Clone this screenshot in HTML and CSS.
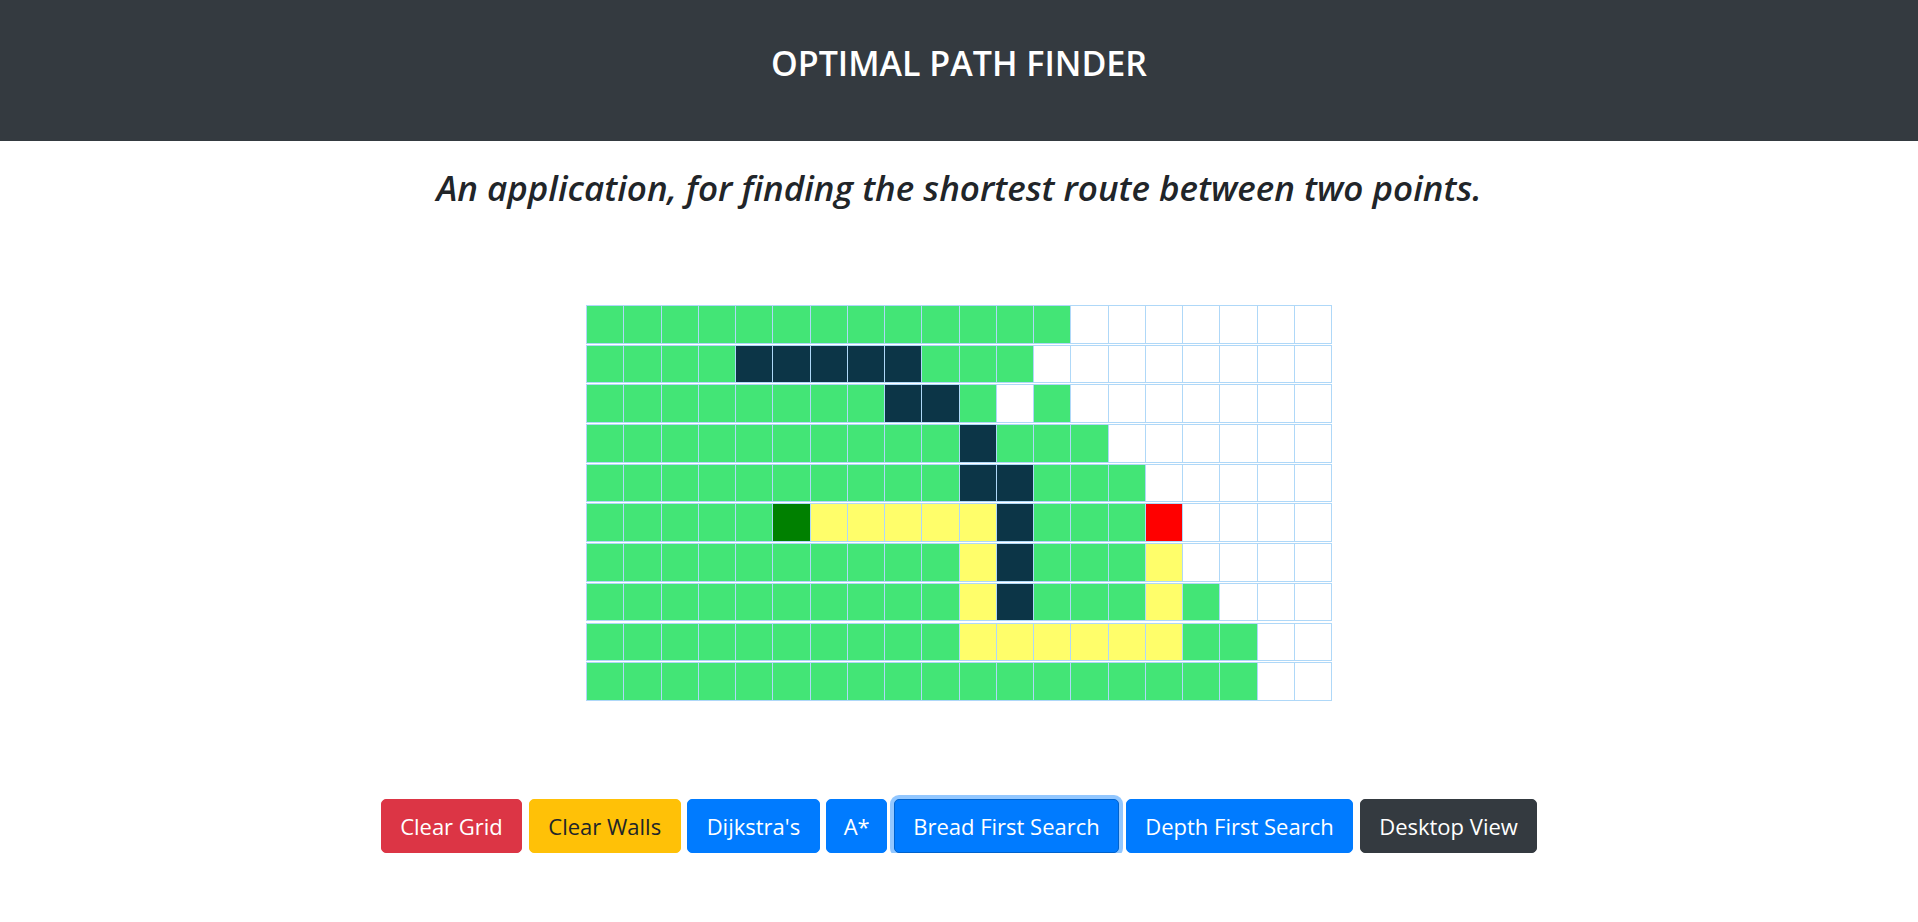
FILE: index.html
```html
<!DOCTYPE html>
<html lang="en">
<head>
<meta charset="utf-8">
<title>Optimal Path Finder</title>
<link rel="stylesheet" href="styles.css">
</head>
<body>
<header class="header">
  <h1 class="title">OPTIMAL PATH FINDER</h1>
</header>
<h2 class="subtitle">An application, for finding the shortest route between two points.</h2>
<div class="grid">
  <div class="row">
    <div class="c v"></div><div class="c v"></div><div class="c v"></div><div class="c v"></div><div class="c v"></div><div class="c v"></div><div class="c v"></div><div class="c v"></div><div class="c v"></div><div class="c v"></div><div class="c v"></div><div class="c v"></div><div class="c v"></div><div class="c"></div><div class="c"></div><div class="c"></div><div class="c"></div><div class="c"></div><div class="c"></div><div class="c"></div>
  </div>
  <div class="row">
    <div class="c v"></div><div class="c v"></div><div class="c v"></div><div class="c v"></div><div class="c w"></div><div class="c w"></div><div class="c w"></div><div class="c w"></div><div class="c w"></div><div class="c v"></div><div class="c v"></div><div class="c v"></div><div class="c"></div><div class="c"></div><div class="c"></div><div class="c"></div><div class="c"></div><div class="c"></div><div class="c"></div><div class="c"></div>
  </div>
  <div class="row">
    <div class="c v"></div><div class="c v"></div><div class="c v"></div><div class="c v"></div><div class="c v"></div><div class="c v"></div><div class="c v"></div><div class="c v"></div><div class="c w"></div><div class="c w"></div><div class="c v"></div><div class="c"></div><div class="c v"></div><div class="c"></div><div class="c"></div><div class="c"></div><div class="c"></div><div class="c"></div><div class="c"></div><div class="c"></div>
  </div>
  <div class="row">
    <div class="c v"></div><div class="c v"></div><div class="c v"></div><div class="c v"></div><div class="c v"></div><div class="c v"></div><div class="c v"></div><div class="c v"></div><div class="c v"></div><div class="c v"></div><div class="c w"></div><div class="c v"></div><div class="c v"></div><div class="c v"></div><div class="c"></div><div class="c"></div><div class="c"></div><div class="c"></div><div class="c"></div><div class="c"></div>
  </div>
  <div class="row">
    <div class="c v"></div><div class="c v"></div><div class="c v"></div><div class="c v"></div><div class="c v"></div><div class="c v"></div><div class="c v"></div><div class="c v"></div><div class="c v"></div><div class="c v"></div><div class="c w"></div><div class="c w"></div><div class="c v"></div><div class="c v"></div><div class="c v"></div><div class="c"></div><div class="c"></div><div class="c"></div><div class="c"></div><div class="c"></div>
  </div>
  <div class="row">
    <div class="c v"></div><div class="c v"></div><div class="c v"></div><div class="c v"></div><div class="c v"></div><div class="c s"></div><div class="c p"></div><div class="c p"></div><div class="c p"></div><div class="c p"></div><div class="c p"></div><div class="c w"></div><div class="c v"></div><div class="c v"></div><div class="c v"></div><div class="c f"></div><div class="c"></div><div class="c"></div><div class="c"></div><div class="c"></div>
  </div>
  <div class="row">
    <div class="c v"></div><div class="c v"></div><div class="c v"></div><div class="c v"></div><div class="c v"></div><div class="c v"></div><div class="c v"></div><div class="c v"></div><div class="c v"></div><div class="c v"></div><div class="c p"></div><div class="c w"></div><div class="c v"></div><div class="c v"></div><div class="c v"></div><div class="c p"></div><div class="c"></div><div class="c"></div><div class="c"></div><div class="c"></div>
  </div>
  <div class="row">
    <div class="c v"></div><div class="c v"></div><div class="c v"></div><div class="c v"></div><div class="c v"></div><div class="c v"></div><div class="c v"></div><div class="c v"></div><div class="c v"></div><div class="c v"></div><div class="c p"></div><div class="c w"></div><div class="c v"></div><div class="c v"></div><div class="c v"></div><div class="c p"></div><div class="c v"></div><div class="c"></div><div class="c"></div><div class="c"></div>
  </div>
  <div class="row">
    <div class="c v"></div><div class="c v"></div><div class="c v"></div><div class="c v"></div><div class="c v"></div><div class="c v"></div><div class="c v"></div><div class="c v"></div><div class="c v"></div><div class="c v"></div><div class="c p"></div><div class="c p"></div><div class="c p"></div><div class="c p"></div><div class="c p"></div><div class="c p"></div><div class="c v"></div><div class="c v"></div><div class="c"></div><div class="c"></div>
  </div>
  <div class="row">
    <div class="c v"></div><div class="c v"></div><div class="c v"></div><div class="c v"></div><div class="c v"></div><div class="c v"></div><div class="c v"></div><div class="c v"></div><div class="c v"></div><div class="c v"></div><div class="c v"></div><div class="c v"></div><div class="c v"></div><div class="c v"></div><div class="c v"></div><div class="c v"></div><div class="c v"></div><div class="c v"></div><div class="c"></div><div class="c"></div>
  </div>
</div>
<div class="controls">
  <button class="btn btn-red">Clear Grid</button>
  <button class="btn btn-yellow">Clear Walls</button>
  <button class="btn btn-blue">Dijkstra's</button>
  <button class="btn btn-blue btn-narrow">A*</button>
  <button class="btn btn-blue btn-focus">Bread First Search</button>
  <button class="btn btn-blue">Depth First Search</button>
  <button class="btn btn-dark">Desktop View</button>
</div>
</body>
</html>
```
FILE: styles.css
```css
html, body {
  margin: 0;
  padding: 0;
  background: #ffffff;
}

body {
  font-family: "Open Sans", "Noto Sans", "Liberation Sans", sans-serif;
  color: #212529;
}

.header {
  background: #343a40;
  height: 141px;
  box-sizing: border-box;
  padding-top: 43px;
  text-align: center;
}

.title {
  margin: 0;
  color: #ffffff;
  font-size: 34px;
  font-weight: 600;
  line-height: 1.2;
}

.subtitle {
  margin: 26px 0 0;
  text-align: center;
  font-style: italic;
  font-weight: 600;
  font-size: 35px;
  line-height: 1.2;
  color: #212529;
}

.grid {
  width: 746px;
  margin: 96px auto 0;
  display: flex;
  flex-direction: column;
  gap: 1.2px;
}

.row {
  display: flex;
  border-left: 1px solid #afd8f8;
}

.c {
  box-sizing: border-box;
  width: 37.25px;
  height: 38.5px;
  border: 1px solid #afd8f8;
  border-left: none;
  background: #ffffff;
}

.v { background: #43e576; }
.w { background: #0c3547; }
.p { background: #fffe6a; }
.s { background: #008000; }
.f { background: #ff0000; }

.controls {
  display: flex;
  justify-content: center;
  gap: 6.5px;
  margin-top: 98px;
}

.btn {
  font-family: "Open Sans", "Noto Sans", "Liberation Sans", sans-serif;
  font-size: 22px;
  line-height: 36px;
  padding: 8px 18.5px;
  border: 1px solid transparent;
  border-radius: 5px;
  color: #ffffff;
  cursor: pointer;
}

.btn-narrow {
  padding-left: 16.5px;
  padding-right: 16.5px;
}

.btn-red { background: #dc3545; border-color: #dc3545; }
.btn-yellow { background: #ffc107; border-color: #ffc107; color: #212529; }
.btn-blue { background: #007bff; border-color: #007bff; }
.btn-dark { background: #343a40; border-color: #343a40; }

.btn-focus {
  background: #007bff;
  border-color: #0062cc;
  box-shadow: 0 0 0 4px rgba(38, 143, 255, 0.5);
}
```
